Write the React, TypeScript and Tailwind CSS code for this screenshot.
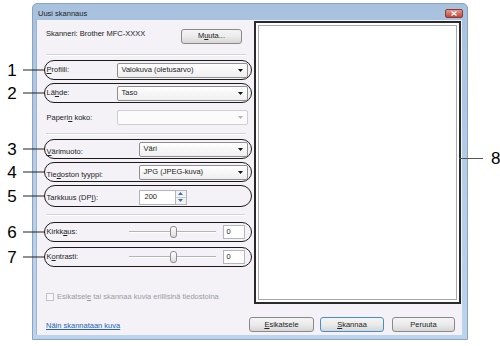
import React from "react";

function Callout({ n }: { n: string }) {
  return (
    <div className="absolute right-full top-1/2 -translate-y-1/2 flex items-center pointer-events-none">
      <span className="w-[14px] text-center text-[17px] leading-none text-black font-['Liberation_Sans',Arial,sans-serif]">{n}</span>
      <span className="ml-[4px] h-[1.5px] w-[22px] bg-[#222]" />
    </div>
  );
}

function Arrow({ color = "#111" }: { color?: string }) {
  return (
    <svg width="5" height="3" viewBox="0 0 5 3" className="mr-[4px] shrink-0">
      <path d="M0 0H5L2.5 3Z" fill={color} />
    </svg>
  );
}

function Combo({ text, className }: { text: string; className: string }) {
  return (
    <div className={`h-[15px] flex items-center border border-[#8f8f8f] rounded-[2px] bg-gradient-to-b from-white to-[#eeeeee] ${className}`}>
      <span className="flex-1 pl-[4px] leading-none text-[#222]">{text}</span>
      <Arrow />
    </div>
  );
}

function Sep({ className }: { className: string }) {
  return <div className={`h-[2px] border-t border-[#d4d3d8] border-b border-b-white ${className}`} />;
}

function Slider({ value }: { value: string }) {
  return (
    <>
      <div className="relative w-[87px] h-[12px] flex items-center">
        <div className="w-full h-[2px] border-t border-[#b5b5b5] border-b border-b-white" />
        <div className="absolute left-[41px] top-0 w-[7px] h-[12px] rounded-[3px] border border-[#8d8d8d] bg-gradient-to-b from-white to-[#dcdcdc]" />
      </div>
      <div className="ml-[7px] w-[22px] h-[14px] border border-[#b4b6bd] bg-white flex items-center pl-[3px] text-[#222] leading-none">
        {value}
      </div>
    </>
  );
}

function Btn({ children, className, def }: { children: React.ReactNode; className: string; def?: boolean }) {
  return (
    <div
      className={`h-[15px] flex items-center justify-center rounded-[3px] border ${def ? "border-[#4a90c8]" : "border-[#8a8a8a]"} bg-gradient-to-b from-[#f4f4f4] via-[#ebebeb] to-[#d6d6d6] text-[#222] leading-none ${className}`}
    >
      {children}
    </div>
  );
}

export default function App() {
  return (
    <div className="w-[500px] h-[346px] bg-white overflow-hidden text-[7.5px] font-['Liberation_Sans',Arial,sans-serif]">
      <div className="pt-[3px] pl-[32px]">
        <div className="w-[436px] h-[337px] flex flex-col rounded-t-[5px] border border-[#8ba3c0] bg-gradient-to-b from-[#a7c1df] via-[#b6cde8] to-[#bcd3ec]">
          {/* title bar */}
          <div className="h-[16px] flex items-center pl-[5px] pr-[4px]">
            <span className="text-[#222] leading-none mt-[4px]">Uusi skannaus</span>
            <div className="ml-auto mt-[3px] w-[18px] h-[9px] rounded-[2px] bg-gradient-to-b from-[#e09a8e] to-[#c2473a] border border-[#8a3b33] flex items-center justify-center">
              <svg width="6" height="5" viewBox="0 0 6 5">
                <path d="M0.5 0.5L5.5 4.5M5.5 0.5L0.5 4.5" stroke="#fff" strokeWidth="1.3" />
              </svg>
            </div>
          </div>
          {/* client */}
          <div className="ml-[3px] mr-[5px] mb-[4px] flex-1 flex flex-col bg-[#f4f2f7] border-l border-[#9fb6d2]">
            <div className="flex h-[284px]">
              {/* left panel */}
              <div className="w-[217px] flex flex-col">
                <div className="mt-[9px] h-[14px] pl-[9px] pr-[12px] flex items-center">
                  <span className="text-[#222] leading-none -mt-[4px]">Skanneri: Brother MFC-XXXX</span>
                  <Btn className="ml-auto w-[61px]">
                    M<span className="underline">u</span>uta...
                  </Btn>
                </div>
                <Sep className="mt-[11px] ml-[9px] mr-[8px]" />
                <div className="relative mt-[4px] ml-[7px] w-[208px] h-[20px] rounded-full border-[1.5px] border-[#1b1b1b] flex items-center pl-[1.5px]">
                  <Callout n="1" />
                  <span className="w-[70px] leading-none text-[#222]"><span className="underline">P</span>rofiili:</span>
                  <Combo text="Valokuva (oletusarvo)" className="w-[131px]" />
                </div>
                <div className="relative mt-[3px] ml-[7px] w-[208px] h-[20px] rounded-full border-[1.5px] border-[#1b1b1b] flex items-center pl-[1.5px]">
                  <Callout n="2" />
                  <span className="w-[70px] leading-none text-[#222]">Lä<span className="underline">h</span>de:</span>
                  <Combo text="Taso" className="w-[131px]" />
                </div>
                <div className="mt-[7px] ml-[7px] w-[208px] h-[15px] border-[1.5px] border-transparent flex items-center pl-[1.5px]">
                  <span className="w-[70px] leading-none text-[#222]">Paperi<span className="underline">n</span> koko:</span>
                  <div className="w-[131px] h-[15px] flex items-center border border-[#cfcfd3] rounded-[2px] bg-[#fbfbfc]">
                    <span className="flex-1" />
                    <Arrow color="#b5b5b5" />
                  </div>
                </div>
                <Sep className="mt-[8px] ml-[9px] mr-[8px]" />
                <div className="relative mt-[4px] ml-[7px] w-[208px] h-[20px] rounded-full border-[1.5px] border-[#1b1b1b] flex items-center pl-[1.5px]">
                  <Callout n="3" />
                  <span className="w-[92px] leading-none text-[#222] mt-[6px]"><span className="underline">V</span>ärimuoto:</span>
                  <Combo text="Väri" className="w-[109px]" />
                </div>
                <div className="relative mt-[3px] ml-[7px] w-[208px] h-[20px] rounded-full border-[1.5px] border-[#1b1b1b] flex items-center pl-[1.5px]">
                  <Callout n="4" />
                  <span className="w-[92px] leading-none text-[#222] mt-[5px]">Tie<span className="underline">d</span>oston tyyppi:</span>
                  <Combo text="JPG (JPEG-kuva)" className="w-[109px]" />
                </div>
                <div className="relative mt-[3px] ml-[7px] w-[208px] h-[22px] rounded-full border-[1.5px] border-[#1b1b1b] flex items-center pl-[1.5px]">
                  <Callout n="5" />
                  <span className="w-[92px] leading-none text-[#222] mt-[4px]">Tarkkuus (DP<span className="underline">I</span>):</span>
                  <div className="flex items-center h-[15px] mt-[2px]">
                    <div className="w-[37px] h-[15px] border border-[#b4b6bd] bg-white flex items-center pl-[5px] leading-none text-[#222]">200</div>
                    <div className="w-[11px] h-[15px] flex flex-col border border-l-0 border-[#b4b6bd] bg-[#f2f2f2]">
                      <div className="flex-1 flex items-center justify-center border-b border-[#c9c9c9]">
                        <svg width="5" height="3" viewBox="0 0 5 3"><path d="M0 3H5L2.5 0Z" fill="#3d6fa8" /></svg>
                      </div>
                      <div className="flex-1 flex items-center justify-center">
                        <svg width="5" height="3" viewBox="0 0 5 3"><path d="M0 0H5L2.5 3Z" fill="#3d6fa8" /></svg>
                      </div>
                    </div>
                  </div>
                </div>
                <Sep className="mt-[7px] ml-[9px] mr-[9px]" />
                <div className="relative mt-[6px] ml-[7px] w-[208px] h-[20px] rounded-full border-[1.5px] border-[#1b1b1b] flex items-center pl-[1.5px]">
                  <Callout n="6" />
                  <span className="w-[82px] leading-none text-[#222]">Kirkk<span className="underline">a</span>us:</span>
                  <Slider value="0" />
                </div>
                <div className="relative mt-[5px] ml-[7px] w-[208px] h-[20px] rounded-full border-[1.5px] border-[#1b1b1b] flex items-center pl-[1.5px]">
                  <Callout n="7" />
                  <span className="w-[82px] leading-none text-[#222]">K<span className="underline">o</span>ntrasti:</span>
                  <Slider value="0" />
                </div>
                <div className="mt-[26px] ml-[9px] h-[8px] flex items-center">
                  <div className="w-[8px] h-[8px] border border-[#c2c2c6] bg-[#f7f7f9]" />
                  <span className="ml-[3px] leading-none text-[#9a9a9e]">
                    Esikatsel<span className="underline">e</span> tai skannaa kuvia erillisinä tiedostoina
                  </span>
                </div>
              </div>
              {/* preview */}
              <div className="relative mt-[1px] w-[207px] h-[283px] border-2 border-[#2a2a2a] p-[2px] bg-white">
                <div className="w-full h-full border border-[#a9a9a9] bg-white" />
                <div className="absolute left-full top-[127px] flex items-center">
                  <span className="h-[1.5px] w-[24px] bg-[#555]" />
                  <span className="ml-[8px] text-[17px] leading-none text-black font-['Liberation_Sans',Arial,sans-serif]">8</span>
                </div>
              </div>
            </div>
            {/* bottom */}
            <div className="flex items-start pt-[13px] pl-[9px] pr-[7px]">
              <span className="mt-[5px] leading-none text-[#1d62b5] underline">Näin skannataan kuva</span>
              <Btn className="ml-auto w-[65px]">
                <span className="underline">E</span>sikatsele
              </Btn>
              <Btn def className="ml-[6px] w-[64px]">
                <span className="underline">S</span>kannaa
              </Btn>
              <Btn className="ml-[8px] w-[63px]">Peruuta</Btn>
            </div>
          </div>
        </div>
      </div>
    </div>
  );
}
